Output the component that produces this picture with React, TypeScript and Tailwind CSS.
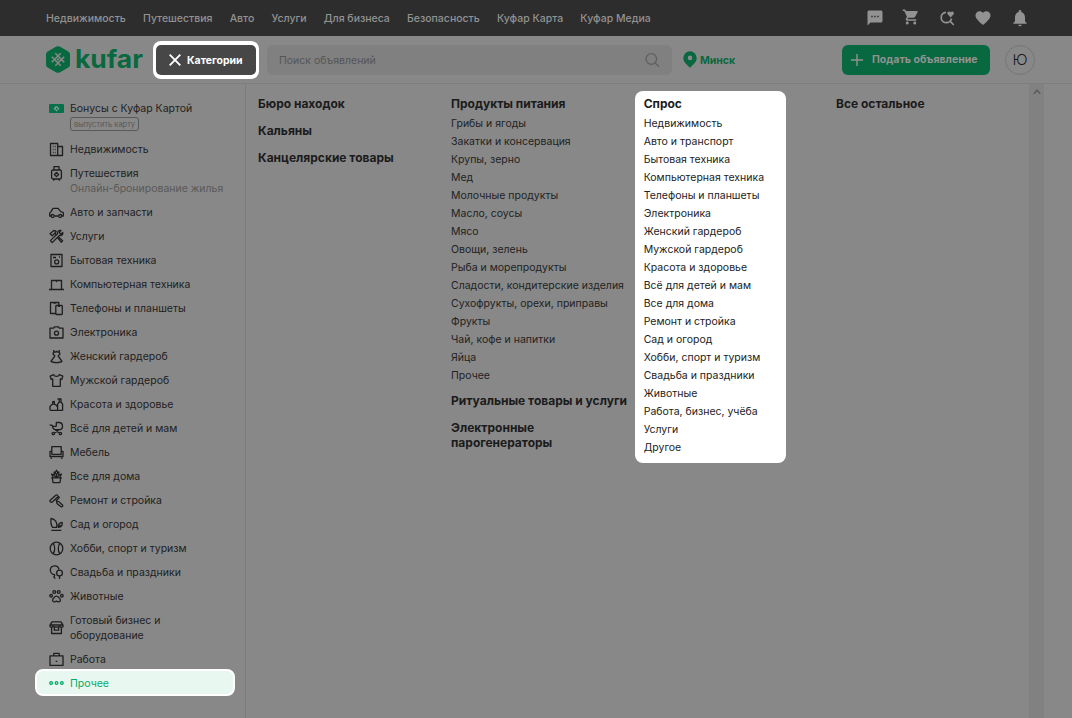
import type { ReactNode } from "react";
import { MdFavorite, MdNotifications, MdShoppingCart, MdSms } from "react-icons/md";
import { clsx } from "clsx";

const topLinks = [
  "Недвижимость",
  "Путешествия",
  "Авто",
  "Услуги",
  "Для бизнеса",
  "Безопасность",
  "Куфар Карта",
  "Куфар Медиа",
];

type Category = {
  title: string;
  note?: string;
  badge?: string;
  active?: boolean;
  icon: ReactNode;
};

const categories: Category[] = [
  {
    title: "Бонусы с Куфар Картой",
    badge: "выпустить карту",
    icon: (
      <>
        <rect x="0" y="3" width="15" height="9" rx="1" fill="#08704a" stroke="none" />
        <path d="M7.5 5.4 9.6 7.5 7.5 9.6 5.4 7.5Z" stroke="#8fa99c" strokeDasharray="1.8 .6" />
      </>
    ),
  },
  {
    title: "Недвижимость",
    icon: (
      <>
        <path d="M1.5 1.5h7.2v12H1.5zM8.7 4.5h4.8v9H8.7" />
        <path d="M3.8 4.5h.8M5.8 4.5h.8M3.8 7.5h.8M5.8 7.5h.8M3.8 10.5h.8M5.8 10.5h.8" />
      </>
    ),
  },
  {
    title: "Путешествия",
    note: "Онлайн-бронирование жилья",
    icon: (
      <>
        <rect x="2.6" y="4" width="9.8" height="9" rx="1.4" />
        <path d="M5 4V.7h5V4M4.8 13v1.7M10.2 13v1.7" />
        <path d="m7.5 6.4 2.1 2.1-2.1 2.1-2.1-2.1Z" />
      </>
    ),
  },
  {
    title: "Авто и запчасти",
    icon: (
      <>
        <path d="M2 11H.7V8.2L2.2 6.3 4 3.4h5l2.8 3.2 2.5.9v3.5H13M5.4 11h4.2" />
        <circle cx="3.7" cy="11" r="1.5" />
        <circle cx="11.2" cy="11" r="1.5" />
      </>
    ),
  },
  {
    title: "Услуги",
    icon: (
      <>
        <path d="m1 4.8 3.8-3.3 2.3.6-1 2-2.9 2.6zM5.8 4.2l1.4 1.5M8.8 9l3.4 4.2 1.4-1.4-3.8-3.6" />
        <path d="M13.8 3.5 11.9 5.2l-1.7-1.7L12 1.4c-2.4-.4-3.9 1.3-3.5 3.3L1.4 11.6l1.8 2 7.2-7.1c2 .5 3.8-.8 3.4-3Z" />
      </>
    ),
  },
  {
    title: "Бытовая техника",
    icon: (
      <>
        <path d="M2 1.5h11v12H2zM4 4.5h3M10 4h1" />
        <circle cx="7.7" cy="8.9" r="2" />
      </>
    ),
  },
  {
    title: "Компьютерная техника",
    icon: <path d="M2.5 12V3.5h10V12M0 12.5h15M7 4.5h1" />,
  },
  {
    title: "Телефоны и планшеты",
    icon: (
      <>
        <path d="M6.8 12.5H1.5v-11h8.3v2.7M4.5 2h2.4" />
        <rect x="6.8" y="4.5" width="6.5" height="9" rx=".7" />
        <path d="M9.2 5.3h1.8" />
      </>
    ),
  },
  {
    title: "Электроника",
    icon: (
      <>
        <path d="M1 3.2h3.6l.9-1.3h4l.9 1.3H14V13H1z" />
        <circle cx="7.5" cy="8.2" r="2" />
      </>
    ),
  },
  {
    title: "Женский гардероб",
    icon: <path d="M4.8 1v2L4 4.8 5.8 7 2 12.3c1.6 1.7 9.4 1.7 11 0L9.2 7 11 4.8 10.2 3V1M4.8 2.2c1 1.4 2 1.2 2.7 0 .7 1.2 1.7 1.4 2.7 0" />,
  },
  {
    title: "Мужской гардероб",
    icon: <path d="M4.7 1.6 1.2 3.1l.9 3.3 1.6-.4v7.3h7.6V6l1.6.4.9-3.3-3.5-1.5C9.7 4 5.3 4 4.7 1.6Z" />,
  },
  {
    title: "Красота и здоровье",
    icon: <path d="M1 13.3V9.6c1.6-3.4 6-3.4 7 0M3.6 6.8V4.9l1.7-.6v2.4M8.6 13.3V7.2l1.5-2h2l1.5 2v6.1H1M10.2 5V2h1.8v3M8.5 2H12" />,
  },
  {
    title: "Всё для детей и мам",
    icon: (
      <>
        <path d="M7.3 5.4V1.5H10c4.4.2 4.8 6.6.6 7.1H6.4c-2.3-.2-2.8-2.2-3.1-4.3L.6 3.8M3.3 5.4h4M6.3 9l4.3 3M10 9l-4.3 3" />
        <circle cx="4.3" cy="12.5" r="1.2" />
        <circle cx="11.4" cy="12.5" r="1.2" />
      </>
    ),
  },
  {
    title: "Мебель",
    icon: <path d="M2.8 6V1.6h9.4V6M1 6.3h1.8v3h9.4v-3H14v5.2H1zM2.2 12.5v1.6M12.8 12.5v1.6" />,
  },
  {
    title: "Все для дома",
    icon: <path d="M2.2 8.9h10.6M3.3 9l.8 4.6h6.8l.8-4.6M4.2 8.5 2.6 5l2.6 1.3 2 2.2M5.2 6.3V3l1 .8M7.5 8.5V5.6L6.2 3.8 7.5 1.2l1.3 2.6-1.3 1.8M8.8 3.8l1-.8v3.3L12.4 5l-1.6 3.5M9.8 6.3l-2 2.2" />,
  },
  {
    title: "Ремонт и стройка",
    icon: <path d="m1.2 7.2 5.6-5c1.3-.8 2.7.6 1.9 1.9L3 9.2c-1.3.6-2.5-.9-1.8-2ZM9 3.2l1.4 1.2-3.2 3.3 1.2 1M8.2 8.5c1.6-.6 2.2.3 2.7 1.2l2.6 2.4c.7 1-.7 2.4-1.8 1.5L8.5 10.9c-1-.7-1.2-1.7-.3-2.4Z" />,
  },
  {
    title: "Сад и огород",
    icon: <path d="M2 1.5C6 2 8.7 5.2 7.7 10.3H3.6C1.8 8 1.6 5 2 1.5ZM9.4 10.3c-.4-3 .8-4.7 3.8-5 .3 3-.8 4.9-3.8 5ZM9.4 10.3l2-2.4M2.3 13.4h10" />,
  },
  {
    title: "Хобби, спорт и туризм",
    icon: (
      <>
        <circle cx="7.5" cy="7.5" r="6.3" />
        <path d="M4.2 2.3c2 2.7 2 7.7 0 10.4M10.8 2.3c-2 2.7-2 7.7 0 10.4" />
      </>
    ),
  },
  {
    title: "Свадьба и праздники",
    icon: (
      <>
        <path d="M6 9.7C3.3 9.6 1.3 7.5 1.3 5A4.4 4.4 0 0 1 10 4.5M6 9.7 4.8 12c1 .2 1.2 1 .8 1.8" />
        <circle cx="10.5" cy="8" r="2.9" />
        <path d="M10.5 11v3" />
      </>
    ),
  },
  {
    title: "Животные",
    icon: (
      <>
        <circle cx="2.1" cy="6.7" r="1.3" />
        <circle cx="5.3" cy="3" r="1.4" />
        <circle cx="9.7" cy="3" r="1.4" />
        <circle cx="12.9" cy="6.7" r="1.3" />
        <path d="M5 8.7c1.6-2.1 3.4-2.1 5 0 2 1.5 2 4.3-.8 4.1L7.5 12.2l-1.7.6C3 13 3 10.2 5 8.7Z" />
      </>
    ),
  },
  {
    title: "Готовый бизнес и оборудование",
    icon: <path d="M3 1.8h9l2 3.4v1.5c-1.4 1-2.2.8-3-.3-.7 1-6.3 1-7 0-.8 1.1-1.6 1.3-3 .3V5.2zM2.6 7.5v6h9.8v-6M5.3 7.4v2.8h4.4V7.4M1 5h13" />,
  },
  {
    title: "Работа",
    icon: <path d="M1 3.8h13v9.6H1zM4.8 3.5V1.4h5.4v2.1M6.7 9.3h1.6" />,
  },
  {
    title: "Прочее",
    active: true,
    icon: (
      <>
        <circle cx="2.1" cy="8" r="1.3" />
        <circle cx="7.5" cy="8" r="1.3" />
        <circle cx="12.9" cy="8" r="1.3" />
      </>
    ),
  },
];

type Group = { title: string; items?: string[]; highlighted?: boolean };

const columns: Group[][] = [
  [{ title: "Бюро находок" }, { title: "Кальяны" }, { title: "Канцелярские товары" }],
  [
    {
      title: "Продукты питания",
      items: [
        "Грибы и ягоды",
        "Закатки и консервация",
        "Крупы, зерно",
        "Мед",
        "Молочные продукты",
        "Масло, соусы",
        "Мясо",
        "Овощи, зелень",
        "Рыба и морепродукты",
        "Сладости, кондитерские изделия",
        "Сухофрукты, орехи, приправы",
        "Фрукты",
        "Чай, кофе и напитки",
        "Яйца",
        "Прочее",
      ],
    },
    { title: "Ритуальные товары и услуги" },
    { title: "Электронные парогенераторы" },
  ],
  [
    {
      title: "Спрос",
      highlighted: true,
      items: [
        "Недвижимость",
        "Авто и транспорт",
        "Бытовая техника",
        "Компьютерная техника",
        "Телефоны и планшеты",
        "Электроника",
        "Женский гардероб",
        "Мужской гардероб",
        "Красота и здоровье",
        "Всё для детей и мам",
        "Все для дома",
        "Ремонт и стройка",
        "Сад и огород",
        "Хобби, спорт и туризм",
        "Свадьба и праздники",
        "Животные",
        "Работа, бизнес, учёба",
        "Услуги",
        "Другое",
      ],
    },
  ],
  [{ title: "Все остальное" }],
];

function TopBar() {
  return (
    <div className="flex h-9 items-center bg-[#2d2d2d] pl-[46px] pr-[42px] text-[#929292]">
      <nav className="flex gap-[17.2px] pt-px text-[10.5px] font-medium">
        {topLinks.map((link) => (
          <a key={link} className="whitespace-nowrap">
            {link}
          </a>
        ))}
      </nav>
      <div className="ml-auto flex items-center gap-[18px]">
        <MdSms size={18} />
        <MdShoppingCart size={18} className="mb-0.5" />
        <svg className="h-[18px] w-[18px]" viewBox="0 0 18 18" fill="none" stroke="currentColor" strokeWidth="1.7">
          <path d="M8 3.3a5.2 5.2 0 1 0 5.5 6.2M12 12.2l3.8 3.8" />
          <path d="m12.6 8.4-3-3.1C8.5 3.3 11 1.5 12.6 3.3c1.6-1.8 4.1 0 3 2Z" fill="currentColor" stroke="none" />
        </svg>
        <MdFavorite size={18} />
        <MdNotifications size={20} />
      </div>
    </div>
  );
}

function Logo() {
  return (
    <div className="flex w-[107px] shrink-0 items-center text-[#08683f]">
      <svg className="h-[27px] w-[24px]" viewBox="0 0 24 27">
        <path
          d="M10.3.6a3.5 3.5 0 0 1 3.4 0l8.6 4.8A3.3 3.3 0 0 1 24 8.3v10.4c0 1.2-.6 2.3-1.7 2.9l-8.6 4.8a3.5 3.5 0 0 1-3.4 0l-8.6-4.8A3.3 3.3 0 0 1 0 18.7V8.3c0-1.2.6-2.3 1.7-2.9Z"
          fill="currentColor"
        />
        <path
          d="m9.3 7.3 8.9 8.9M5.8 10.8l8.9 8.9M14.7 7.3l-8.9 8.9M18.2 10.8l-8.9 8.9"
          fill="none"
          stroke="#888"
          strokeWidth="1.6"
        />
        <path d="m12 12.1 1.4 1.4-1.4 1.4-1.4-1.4Z" fill="#888" />
      </svg>
      <svg className="ml-[6px] h-[30px] w-[70px] overflow-visible" viewBox="0 0 70 30" fill="currentColor">
        <text
          x="-1"
          y="23.3"
          textLength="68"
          lengthAdjust="spacingAndGlyphs"
          className="font-['Inter',sans-serif] text-[25px] font-bold"
        >
          kufar
        </text>
      </svg>
    </div>
  );
}

function Header() {
  return (
    <header className="flex h-12 items-center border-b border-[#7d7d7d] pl-[46px] pr-[37px]">
      <Logo />
      <div className="h-[38px] w-[106px] shrink-0 rounded-lg bg-white px-[3px] py-1">
        <button type="button" className="flex h-full w-full items-center rounded-[5px] bg-[#474747] pl-[13px] text-white">
          <svg className="h-3 w-3" viewBox="0 0 12 12" fill="none" stroke="currentColor" strokeWidth="1.8">
            <path d="m.7.7 10.6 10.6M11.3.7.7 11.3" />
          </svg>
          <span className="ml-1.5 pt-0.5 text-[10.5px] font-bold">Категории</span>
        </button>
      </div>
      <div className="ml-2 flex h-[30px] w-[405px] shrink-0 items-center rounded-md bg-[#808080] pl-3 pr-3 text-[#555]">
        <span className="pt-0.5 text-[10.5px]">Поиск объявлений</span>
        <svg className="ml-auto h-4 w-4" viewBox="0 0 16 16" fill="none" stroke="#606060" strokeWidth="1.3">
          <circle cx="7.3" cy="7" r="5.3" />
          <path d="m11 10.8 4 4" />
        </svg>
      </div>
      <div className="ml-[11px] flex items-center gap-[3px] text-[#08683f]">
        <svg className="h-[17px] w-3.5" viewBox="0 0 14 17">
          <path
            d="M7 .3a6.7 6.7 0 0 0-6.7 6.6c0 4.3 4.2 7 6.7 9.8 2.5-2.8 6.7-5.5 6.7-9.8A6.7 6.7 0 0 0 7 .3Zm0 4.3a2.3 2.3 0 1 1 0 4.6 2.3 2.3 0 0 1 0-4.6Z"
            fill="currentColor"
            fillRule="evenodd"
          />
        </svg>
        <span className="pt-0.5 text-[10.5px] font-bold">Минск</span>
      </div>
      <button
        type="button"
        className="ml-auto flex h-[30px] w-[148px] shrink-0 items-center rounded-md bg-[#08683f] pl-[9px] text-[#929292]"
      >
        <svg className="h-3 w-3" viewBox="0 0 12 12" stroke="currentColor" strokeWidth="1.4">
          <path d="M6 0v12M0 6h12" />
        </svg>
        <span className="ml-[9px] whitespace-nowrap text-[10.5px] font-bold">Подать объявление</span>
      </button>
      <div className="ml-[15px] flex h-[30px] w-[30px] shrink-0 items-center justify-center rounded-full border border-[#767676] pt-0.5 text-[15px] font-light text-[#1c1c1c]">
        Ю
      </div>
    </header>
  );
}

function CategoryRow({ title, note, badge, active, icon }: Category) {
  return (
    <li
      className={clsx(
        "flex gap-1.5 text-[10.5px] leading-[15px]",
        active
          ? "-mt-0.5 ml-[35px] h-[27px] w-[200px] rounded-lg border-2 border-white bg-[#e8f8f1] py-[4.5px] pl-3 text-[#00ab67]"
          : "py-[4.5px] pl-[49px] text-[#1e1e1e]",
      )}
    >
      <svg
        className={clsx("h-[15px] w-[15px] shrink-0", !note && !badge && "self-center")}
        viewBox="0 0 15 15"
        fill="none"
        stroke="currentColor"
        strokeWidth="1.3"
        strokeLinejoin="round"
      >
        {icon}
      </svg>
      <div className="max-w-[160px]">
        <p className={clsx(title.startsWith("Готовый") && "w-[110px]")}>{title}</p>
        {note && <p className="whitespace-nowrap text-[#595959]">{note}</p>}
        {badge && (
          <span className="mb-[1.5px] mt-[1.5px] flex h-3.5 w-[69px] items-center justify-center whitespace-nowrap rounded-[3px] border border-[#595959] pt-px text-[7.5px] text-[#595959]">
            {badge}
          </span>
        )}
      </div>
    </li>
  );
}

function GroupBlock({ title, items, highlighted }: Group) {
  return (
    <section
      className={clsx(
        highlighted
          ? "-ml-[9px] -mt-[5px] h-[372px] w-[151px] rounded-lg bg-white pl-[9px] pt-[5px]"
          : items
            ? "mb-2"
            : "mb-3",
      )}
    >
      <h2 className="whitespace-nowrap text-[12px] font-bold leading-[15px] text-[#1b1b1b]">
        <span className={clsx(title.startsWith("Электронные") && "block w-[120px] whitespace-normal")}>{title}</span>
      </h2>
      {items && (
        <ul className="mt-1 text-[10.5px] leading-[18px] text-[#222]">
          {items.map((item) => (
            <li key={item} className="whitespace-nowrap">
              {item}
            </li>
          ))}
        </ul>
      )}
    </section>
  );
}

export default function App() {
  return (
    <div className="flex h-[718px] w-[1072px] flex-col overflow-hidden bg-[#888] font-['Inter',sans-serif]">
      <TopBar />
      <Header />
      <div className="flex min-h-0 flex-1">
        <aside className="w-[246px] shrink-0 border-r border-[#7d7d7d] pt-3">
          <ul>
            {categories.map((category) => (
              <CategoryRow key={category.title} {...category} />
            ))}
          </ul>
        </aside>
        <main className="grid flex-1 grid-cols-[193px_192.7px_192.3px_1fr] content-start pl-3 pt-3">
          {columns.map((groups, i) => (
            <div key={i}>
              {groups.map((group) => (
                <GroupBlock key={group.title} {...group} />
              ))}
            </div>
          ))}
        </main>
        <div className="mr-7 flex w-[15px] shrink-0 justify-center bg-[#818181] pt-1">
          <svg className="h-2 w-2" viewBox="0 0 8 8" fill="none" stroke="#5c5c5c" strokeWidth="1.6">
            <path d="m.8 5.8 3.2-3.6 3.2 3.6" />
          </svg>
        </div>
      </div>
    </div>
  );
}
